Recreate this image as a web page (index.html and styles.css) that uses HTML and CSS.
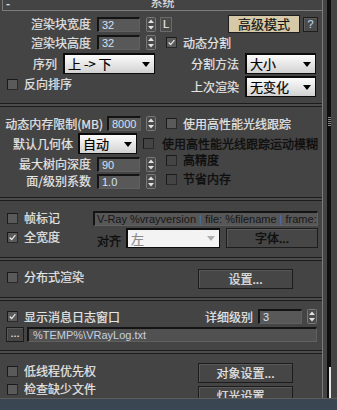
FILE: index.html
```html
<!DOCTYPE html>
<html lang="zh">
<head>
  <meta charset="UTF-8">
  <title>系统</title>
  <link rel="stylesheet" href="styles.css">
</head>
<body>
  <div class="window">
    <div class="main">
      <div class="panel">
        <div class="head"><span class="minus">-</span><span class="title">系统</span></div>

        <!-- 渲染块 -->
        <div class="sec s1">
          <div class="row ra">
            <span class="lbl w91">渲染块宽度</span>
            <span class="spin sp-a">32</span>
            <svg class="arrows" viewBox="0 0 10 15"><rect x="0.5" y="0.5" width="9" height="14" rx="1" fill="#4b4b4b" stroke="#777"/><path d="M5 2.5 L8 6 L2 6Z" fill="#e2e2e2"/><path d="M2 9 L8 9 L5 12.5Z" fill="#e2e2e2"/></svg>
            <span class="btn-l">L</span>
            <span class="btn-adv">高级模式</span>
            <span class="btn-q">?</span>
          </div>
          <div class="row rb">
            <span class="lbl w91">渲染块高度</span>
            <span class="spin sp-a">32</span>
            <svg class="arrows" viewBox="0 0 10 15"><rect x="0.5" y="0.5" width="9" height="14" rx="1" fill="#4b4b4b" stroke="#777"/><path d="M5 2.5 L8 6 L2 6Z" fill="#e2e2e2"/><path d="M2 9 L8 9 L5 12.5Z" fill="#e2e2e2"/></svg>
            <span class="opt o-mid">
              <span class="chk"><svg viewBox="0 0 11 11"><path d="M2 5.5 L4.5 8 L9 2.5" stroke="#e6e6e6" stroke-width="1.6" fill="none"/></svg></span>
              <span class="txt">动态分割</span>
            </span>
          </div>
          <div class="row rc">
            <span class="lbl w57">序列</span>
            <span class="combo cb-seq">上 -&gt; 下<i class="tri"></i></span>
            <span class="lbl push">分割方法</span>
            <span class="combo cb-r">大小<i class="tri"></i></span>
          </div>
          <div class="row rd">
            <span class="opt o-left o-top">
              <span class="chk"></span>
              <span class="txt">反向排序</span>
            </span>
            <span class="lbl push">上次渲染</span>
            <span class="combo cb-r">无变化<i class="tri"></i></span>
          </div>
        </div>
        <div class="sep"></div>

        <!-- 动态内存 -->
        <div class="sec s2">
          <div class="row re">
            <span class="lbl w103">动态内存限制(MB)</span>
            <span class="spin sp-e">8000</span>
            <svg class="arrows ar-e" viewBox="0 0 10 15"><rect x="0.5" y="0.5" width="9" height="14" rx="1" fill="#4b4b4b" stroke="#777"/><path d="M5 2.5 L8 6 L2 6Z" fill="#e2e2e2"/><path d="M2 9 L8 9 L5 12.5Z" fill="#e2e2e2"/></svg>
            <span class="opt o-mid">
              <span class="chk"></span>
              <span class="txt">使用高性能光线跟踪</span>
            </span>
          </div>
          <div class="row rf">
            <span class="lbl w73">默认几何体</span>
            <span class="combo cb-geo">自动<i class="tri"></i></span>
            <span class="chk dis ck-f"></span>
            <span class="txt off mb-txt">使用高性能光线跟踪运动模糊</span>
          </div>
          <div class="row rg">
            <span class="lbl w91">最大树向深度</span>
            <span class="spin sp-a">90</span>
            <svg class="arrows" viewBox="0 0 10 15"><rect x="0.5" y="0.5" width="9" height="14" rx="1" fill="#4b4b4b" stroke="#777"/><path d="M5 2.5 L8 6 L2 6Z" fill="#e2e2e2"/><path d="M2 9 L8 9 L5 12.5Z" fill="#e2e2e2"/></svg>
            <span class="opt o-mid up4">
              <span class="chk dis"></span>
              <span class="txt off">高精度</span>
            </span>
          </div>
          <div class="row rh">
            <span class="lbl w91">面/级别系数</span>
            <span class="spin sp-a">1.0</span>
            <svg class="arrows" viewBox="0 0 10 15"><rect x="0.5" y="0.5" width="9" height="14" rx="1" fill="#4b4b4b" stroke="#777"/><path d="M5 2.5 L8 6 L2 6Z" fill="#e2e2e2"/><path d="M2 9 L8 9 L5 12.5Z" fill="#e2e2e2"/></svg>
            <span class="opt o-mid up2">
              <span class="chk dis"></span>
              <span class="txt off">节省内存</span>
            </span>
          </div>
        </div>
        <div class="sep"></div>

        <!-- 帧标记 -->
        <div class="sec s3">
          <div class="row ri">
            <span class="opt o-left w93">
              <span class="chk"></span>
              <span class="txt">帧标记</span>
            </span>
            <span class="tfield stamp">V-Ray %vrayversion <b>|</b> file: %filename <b>|</b> frame: %frame <b>|</b> primitives: %primitives</span>
          </div>
          <div class="row rj">
            <span class="opt o-left w93 o-top">
              <span class="chk"><svg viewBox="0 0 11 11"><path d="M2 5.5 L4.5 8 L9 2.5" stroke="#e6e6e6" stroke-width="1.6" fill="none"/></svg></span>
              <span class="txt">全宽度</span>
            </span>
            <span class="txt off align-lbl">对齐</span>
            <span class="combo dis cb-align">左<i class="tri"></i></span>
            <span class="btn off btn-font">字体...</span>
          </div>
        </div>
        <div class="sep"></div>

        <!-- 分布式渲染 -->
        <div class="sec s4">
          <div class="row rk">
            <span class="opt o-left w198 o-top">
              <span class="chk"></span>
              <span class="txt">分布式渲染</span>
            </span>
            <span class="btn w95">设置...</span>
          </div>
        </div>
        <div class="sep"></div>

        <!-- 日志 -->
        <div class="sec s5">
          <div class="row rl">
            <span class="opt o-left">
              <span class="chk"><svg viewBox="0 0 11 11"><path d="M2 5.5 L4.5 8 L9 2.5" stroke="#e6e6e6" stroke-width="1.6" fill="none"/></svg></span>
              <span class="txt">显示消息日志窗口</span>
            </span>
            <span class="lbl push">详细级别</span>
            <span class="spin sp-l">3</span>
            <svg class="arrows ar-l" viewBox="0 0 10 15"><rect x="0.5" y="0.5" width="9" height="14" rx="1" fill="#4b4b4b" stroke="#777"/><path d="M5 2.5 L8 6 L2 6Z" fill="#e2e2e2"/><path d="M2 9 L8 9 L5 12.5Z" fill="#e2e2e2"/></svg>
          </div>
          <div class="row rm">
            <span class="btn dots">...</span>
            <span class="tfield logpath">%TEMP%\VRayLog.txt</span>
          </div>
        </div>
        <div class="sep"></div>

        <!-- 其他 -->
        <div class="sec s6">
          <div class="col-l">
            <span class="opt o-left">
              <span class="chk"></span>
              <span class="txt">低线程优先权</span>
            </span>
            <span class="opt o-left">
              <span class="chk"></span>
              <span class="txt">检查缺少文件</span>
            </span>
          </div>
          <div class="col-r">
            <span class="btn">对象设置...</span>
            <span class="btn">灯光设置...</span>
          </div>
        </div>
      </div>
      <div class="scroll">
        <div class="track"><div class="grip"></div><div class="thumb"></div></div>
      </div>
    </div>
    <div class="status"></div>
  </div>
</body>
</html>
```

FILE: styles.css
```css
*{
  margin: 0;
  padding: 0;
  box-sizing: border-box;
}

body{
  width: 337px;
  height: 410px;
  overflow: hidden;
  background-color: #444444;
  color: #e6e6e6;
  font-family: "Noto Sans CJK SC", "Liberation Sans", sans-serif;
  font-size: 12px;
  line-height: 14px;
  -webkit-text-stroke: 0.2px currentColor;
}

.window{
  display: flex;
  flex-direction: column;
  height: 410px;
}

.main{
  display: flex;
  height: 398px;
}

.panel{
  width: 323px;
  height: 398px;
  border-right: 1px solid #7c7c7c;
  overflow: hidden;
}

/* rollout title */
.head{
  display: grid;
  grid-template-columns: 1fr auto 1fr;
  height: 11px;
  margin-left: 2px;
  border-left: 1px solid #7c7c7c;
  border-bottom: 1px solid #7c7c7c;
  overflow: hidden;
  color: #dcdcdc;
}

.head > .minus{
  padding-left: 3px;
  line-height: 8px;
  font-family: "Liberation Sans", sans-serif;
}

.head > .title{
  margin-top: -5px;
  line-height: 14px;
  font-size: 12px;
}

.sep{
  height: 4px;
  border-top: 1px solid #1c1c1c;
  border-bottom: 1px solid #1c1c1c;
  background-color: #4c4c4c;
}

.sec{
  padding-right: 4px;
}

.row{
  display: flex;
  align-items: center;
}

.lbl{
  flex: none;
  text-align: right;
  white-space: nowrap;
}

.w57{ width: 57px; }
.w73{ width: 73px; }
.w91{ width: 91px; }
.w93{ width: 93px; }
.w95{ width: 95px; }
.w103{ width: 103px; }
.w198{ width: 198px; }

.push{
  margin-left: auto;
}

/* spinner field */
.spin{
  flex: none;
  height: 15px;
  padding-left: 3px;
  background-color: #585858;
  border-top: 2px solid #141414;
  border-left: 2px solid #141414;
  border-right: 1px solid #606060;
  border-bottom: 1px solid #606060;
  color: #d2e2f4;
  font-family: "Liberation Sans", sans-serif;
  font-size: 11px;
  line-height: 12px;
  -webkit-text-stroke: 0;
}

.sp-a{
  width: 43px;
  margin-left: 6px;
}

.sp-e{
  width: 34px;
  margin-left: 4px;
}

.sp-l{
  width: 44px;
  margin-left: 5px;
}

.arrows{
  flex: none;
  width: 10px;
  height: 15px;
  margin-left: 6px;
}

.ar-e{ margin-left: 5px; }
.ar-l{ margin-left: 5px; margin-right: 1px; }

/* checkbox option */
.opt{
  display: flex;
  align-items: center;
  flex: none;
}

.o-mid{ margin-left: 10px; }
.o-left{ padding-left: 7px; }
.o-top{ align-self: flex-start; }
.up4{ align-self: flex-start; margin-top: -4px; }
.up2{ align-self: flex-start; margin-top: -2px; }

.chk{
  flex: none;
  display: flex;
  width: 11px;
  height: 11px;
  background-color: #5a5a5a;
  border: 1px solid #1a1a1a;
  border-right-color: #2a2a2a;
  border-bottom-color: #2a2a2a;
}

.chk svg{
  width: 9px;
  height: 9px;
}

.chk.dis{
  background-color: #444444;
}

.opt > .txt{
  margin-left: 6px;
  white-space: nowrap;
}

.txt.off{
  color: #0e0e0e;
  -webkit-text-stroke: 0.35px #0e0e0e;
}

/* dropdown */
.combo{
  flex: none;
  display: flex;
  align-items: center;
  justify-content: space-between;
  height: 21px;
  padding: 0 4px 0 3px;
  background: linear-gradient(#fcfcfc, #d2d2d2);
  border: 1px solid #0c0c0c;
  border-top-width: 2px;
  border-left-width: 2px;
  color: #000;
  font-size: 13px;
  white-space: nowrap;
}

.combo > .tri{
  width: 0;
  height: 0;
  border-top: 5px solid #000;
  border-left: 4px solid transparent;
  border-right: 4px solid transparent;
}

.combo.dis{
  background: #f3f3f3;
  color: #8a8a8a;
}

.combo.dis > .tri{
  border-top-color: #b0b0b0;
}

.cb-seq{
  width: 92px;
  margin-left: 6px;
}

.cb-r{
  width: 71px;
  margin-left: 6px;
  margin-right: 2px;
}

.cb-geo{
  width: 59px;
  margin-left: 5px;
}

.cb-align{
  width: 94px;
  height: 20px;
  margin-left: 5px;
}

/* buttons */
.btn{
  flex: none;
  display: flex;
  align-items: center;
  justify-content: center;
  height: 20px;
  background-color: #464646;
  border: 1px solid #1c1c1c;
  box-shadow: inset 1px 1px 0 #585858;
  white-space: nowrap;
}

.btn.off{
  color: #0e0e0e;
  -webkit-text-stroke: 0.35px #0e0e0e;
}

.btn-l{
  flex: none;
  width: 12px;
  height: 15px;
  margin-left: 4px;
  border: 1px solid #6a6a6a;
  background-color: #4a4a4a;
  text-align: center;
  font-family: "Liberation Sans", sans-serif;
  font-size: 11px;
  line-height: 13px;
}

.btn-adv{
  flex: none;
  width: 72px;
  height: 18px;
  margin-left: auto;
  background-color: #d6c9a7;
  border: 1px solid #1e1e1e;
  color: #161616;
  text-align: center;
  font-size: 13px;
  line-height: 16px;
}

.btn-q{
  flex: none;
  width: 15px;
  height: 15px;
  margin-left: 3px;
  background-color: #4a4a4a;
  border: 1px solid #1e1e1e;
  box-shadow: inset 1px 1px 0 #5c5c5c;
  color: #b4cce6;
  text-align: center;
  font-family: "Liberation Sans", sans-serif;
  font-size: 11px;
  line-height: 13px;
}

/* text fields */
.tfield{
  flex: 1;
  min-width: 0;
  height: 15px;
  padding-left: 2px;
  background-color: #575757;
  border-top: 2px solid #141414;
  border-left: 2px solid #141414;
  border-right: 1px solid #606060;
  border-bottom: 1px solid #606060;
  overflow: hidden;
  white-space: nowrap;
  font-family: "Liberation Sans", sans-serif;
  font-size: 11px;
  line-height: 12px;
  -webkit-text-stroke: 0;
}

.stamp{
  color: #161616;
}

.stamp b{
  font-weight: normal;
  color: #3a78b8;
}

.logpath{
  margin-left: 3px;
  margin-right: 1px;
  padding-left: 4px;
  background-color: #515151;
  color: #c6d0e0;
}

/* rows, top to bottom */
.ra{ height: 18px; margin-top: 4px; }
.rb{ height: 15px; margin-top: 2px; }
.rc{ height: 21px; margin-top: 3px; }
.rd{ height: 21px; margin-top: 2px; }
.rd > .opt{ margin-top: 1px; }
.s1{ padding-bottom: 6px; }

.re{ height: 15px; margin-top: 9px; }
.rf{ height: 21px; margin-top: 2px; }
.ck-f{ margin-left: 6px; }
.mb-txt{ margin-left: 8px; white-space: nowrap; }
.rg{ height: 14px; margin-top: 3px; }
.rh{ height: 14px; margin-top: 3px; }
.s2{ padding-bottom: 9px; }

.ri{ height: 14px; margin-top: 10px; }
.rj{ height: 20px; margin-top: 3px; }
.rj > .opt{ margin-top: 2px; }
.align-lbl{ margin-left: 4px; margin-top: 5px; }
.btn-font{ width: 92px; margin-left: 6px; }
.s3{ padding-bottom: 9px; }

.rk{ height: 19px; margin-top: 8px; }
.rk > .opt{ margin-top: 1px; }
.s4{ padding-bottom: 9px; }

.rl{ height: 15px; margin-top: 8px; }
.rm{ height: 15px; margin-top: 3px; }
.dots{
  width: 18px;
  height: 15px;
  margin-left: 6px;
  font-family: "Liberation Sans", sans-serif;
  font-size: 11px;
  line-height: 10px;
  align-items: flex-start;
}
.s5{ padding-bottom: 8px; }

.s6{
  display: flex;
}

.col-l{
  display: flex;
  flex-direction: column;
  width: 198px;
  gap: 4px;
  margin-top: 10px;
}

.col-r{
  display: flex;
  flex-direction: column;
  width: 95px;
  gap: 3px;
  margin-top: 9px;
}

/* scrollbar */
.scroll{
  flex: 1;
  padding-left: 4px;
}

.track{
  display: flex;
  flex-direction: column;
  justify-content: space-between;
  align-items: flex-end;
  width: 4px;
  height: 398px;
  background-color: #0e0e0e;
}

.grip{
  width: 3px;
  height: 9px;
  margin-top: 117px;
  background: repeating-linear-gradient(#8a8a8a 0 1px, transparent 1px 2px);
}

.thumb{
  width: 2px;
  height: 31px;
  background-color: #e4e4e4;
}

.status{
  height: 12px;
  border-top: 1px solid #5c5c5c;
  background-color: #3a4651;
}
```
